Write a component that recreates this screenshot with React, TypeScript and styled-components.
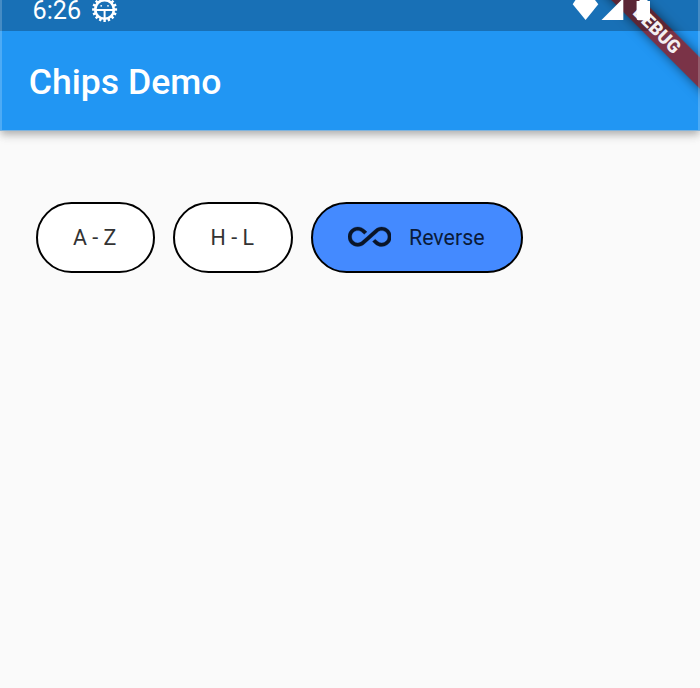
import React from "react";
import styled, { createGlobalStyle } from "styled-components";

const GlobalStyle = createGlobalStyle`
  * { box-sizing: border-box; }
  body { margin: 0; background: #fafafa; font-family: Roboto, sans-serif; }
`;

const Screen = styled.div`
  position: relative;
  width: 700px;
  height: 688px;
  overflow: hidden;
  background: #fafafa;
`;

const Header = styled.header`
  display: flex;
  flex-direction: column;
  height: 131px;
  background: #2196f3;
  border-bottom: 1px solid #7fb3dd;
  box-shadow: 0 4px 7px -1px rgba(0, 0, 0, 0.22), 0 7px 9px rgba(0, 0, 0, 0.06), 0 2px 14px rgba(0, 0, 0, 0.06);
`;

const StatusBar = styled.div`
  position: relative;
  flex: none;
  display: flex;
  align-items: flex-start;
  height: 31px;
  padding: 0 50px 0 32.5px;
  color: #fff;

  &::before {
    content: "";
    position: absolute;
    z-index: 2;
    inset: 0;
    background: rgba(0, 0, 0, 0.25);
  }

  > * {
    position: relative;
    z-index: 4;
  }
`;

const Clock = styled.span`
  width: 59.5px;
  font-size: 25.2px;
  line-height: 22px;
`;

const SystemIcons = styled.div`
  display: flex;
  margin-left: auto;
`;

const Glyph = styled.svg`
  display: block;
  flex: none;
`;

const Title = styled.h1`
  margin: 0;
  padding: 0 28.7px;
  color: #fff;
  font-size: 35.6px;
  font-weight: 500;
  line-height: 103px;
`;

const ChipRow = styled.main`
  display: flex;
  gap: 18px;
  padding: 71px 35.5px;
`;

const Chip = styled.button<{ $width: number; $selected?: boolean }>`
  display: flex;
  align-items: center;
  justify-content: center;
  gap: 17.5px;
  flex: none;
  width: ${(p) => p.$width}px;
  height: 71px;
  padding: 0 1px 1px 0;
  border: 2px solid #000;
  border-radius: 36px;
  background: ${(p) => (p.$selected ? "#448aff" : "#fff")};
  color: ${(p) => (p.$selected ? "#0a1b3a" : "#333")};
  font: 400 21.4px Roboto, sans-serif;
`;

const RibbonStrip = styled.div`
  position: absolute;
  z-index: 1;
  left: 557px;
  top: 19px;
  width: 200px;
  height: 21.5px;
  transform: rotate(45deg);
  background: rgba(147, 23, 22, 0.78);
  box-shadow: 0 0 11px rgba(0, 0, 0, 0.5);
`;

const RibbonLabel = styled(RibbonStrip)`
  z-index: 3;
  background: none;
  box-shadow: none;
  color: #f3eff0;
  font-size: 18.3px;
  font-weight: 900;
  line-height: 22px;
  text-align: center;
`;

const ScreenEdge = styled.div<{ $side: "left" | "right" }>`
  position: absolute;
  z-index: 3;
  top: 0;
  ${(p) => p.$side}: 0;
  width: 2px;
  height: 130px;
  background: rgba(255, 255, 255, 0.2);
`;

const teeth = Array.from({ length: 16 }, (_, i) => i * 22.5);

const DebugBadge = () => (
  <Glyph width="26" height="24" viewBox="92 0 26 24">
    <g stroke="#fff" fill="none">
      <circle cx="104.6" cy="9.5" r="9.3" strokeWidth="2.6" />
      {teeth.map((a) => (
        <path key={a} d="M104.6 -3V0" strokeWidth="2.4" transform={`rotate(${a} 104.6 9.5)`} />
      ))}
      <path d="M96 9.9H113.2M104.6 9.9V18" strokeWidth="2" />
    </g>
    <circle cx="101.2" cy="5.8" r="0.9" fill="#fff" />
    <circle cx="108" cy="5.8" r="0.9" fill="#fff" />
  </Glyph>
);

const SignalIcons = () => (
  <Glyph width="78" height="21" viewBox="572 0 78 21" fill="#fff">
    <path d="M575.5 0H595L598.3 4.3L585.6 19.9L572.7 4.3Z" />
    <path d="M601.5 20L621.5 0H623.3V20Z" />
    <path d="M639.5 0H647.5V1H650V18.5Q650 20.3 648.2 20.3H638.4Q636.6 20.3 636.6 18.5V1H639.5Z" />
  </Glyph>
);

const InfinityIcon = () => (
  <Glyph width="43.5" height="43.5" viewBox="0 0 24 24" fill="#0a1528" stroke="#0a1528" strokeWidth="0.15">
    <path d="M18.6 6.62c-1.44 0-2.8.56-3.77 1.53L12 10.66 10.48 12h.01L7.8 14.39c-.64.64-1.49.99-2.4.99-1.87 0-3.39-1.51-3.39-3.38S3.53 8.62 5.4 8.62c.91 0 1.76.35 2.44 1.03l1.13 1 1.51-1.34L9.22 8.2C8.2 7.18 6.84 6.62 5.4 6.62 2.42 6.62 0 9.04 0 12s2.42 5.38 5.4 5.38c1.44 0 2.8-.56 3.77-1.53l2.83-2.5.01.01L13.52 12h-.01l2.69-2.39c.64-.64 1.49-.99 2.4-.99 1.87 0 3.39 1.51 3.39 3.38s-1.52 3.38-3.39 3.38c-.9 0-1.76-.35-2.44-1.03l-1.14-1.01-1.51 1.34 1.27 1.12c1.02 1.01 2.37 1.57 3.82 1.57 2.98 0 5.4-2.41 5.4-5.38s-2.42-5.38-5.4-5.38z" />
  </Glyph>
);

export default function App() {
  return (
    <Screen>
      <GlobalStyle />
      <Header>
        <StatusBar>
          <Clock>6:26</Clock>
          <DebugBadge />
          <SystemIcons>
            <SignalIcons />
          </SystemIcons>
        </StatusBar>
        <Title>Chips Demo</Title>
      </Header>
      <ChipRow>
        <Chip $width={119.5}>A - Z</Chip>
        <Chip $width={119.5}>H - L</Chip>
        <Chip $width={212.5} $selected>
          <InfinityIcon />
          Reverse
        </Chip>
      </ChipRow>
      <RibbonStrip />
      <RibbonLabel>DEBUG</RibbonLabel>
      <ScreenEdge $side="left" />
      <ScreenEdge $side="right" />
    </Screen>
  );
}
